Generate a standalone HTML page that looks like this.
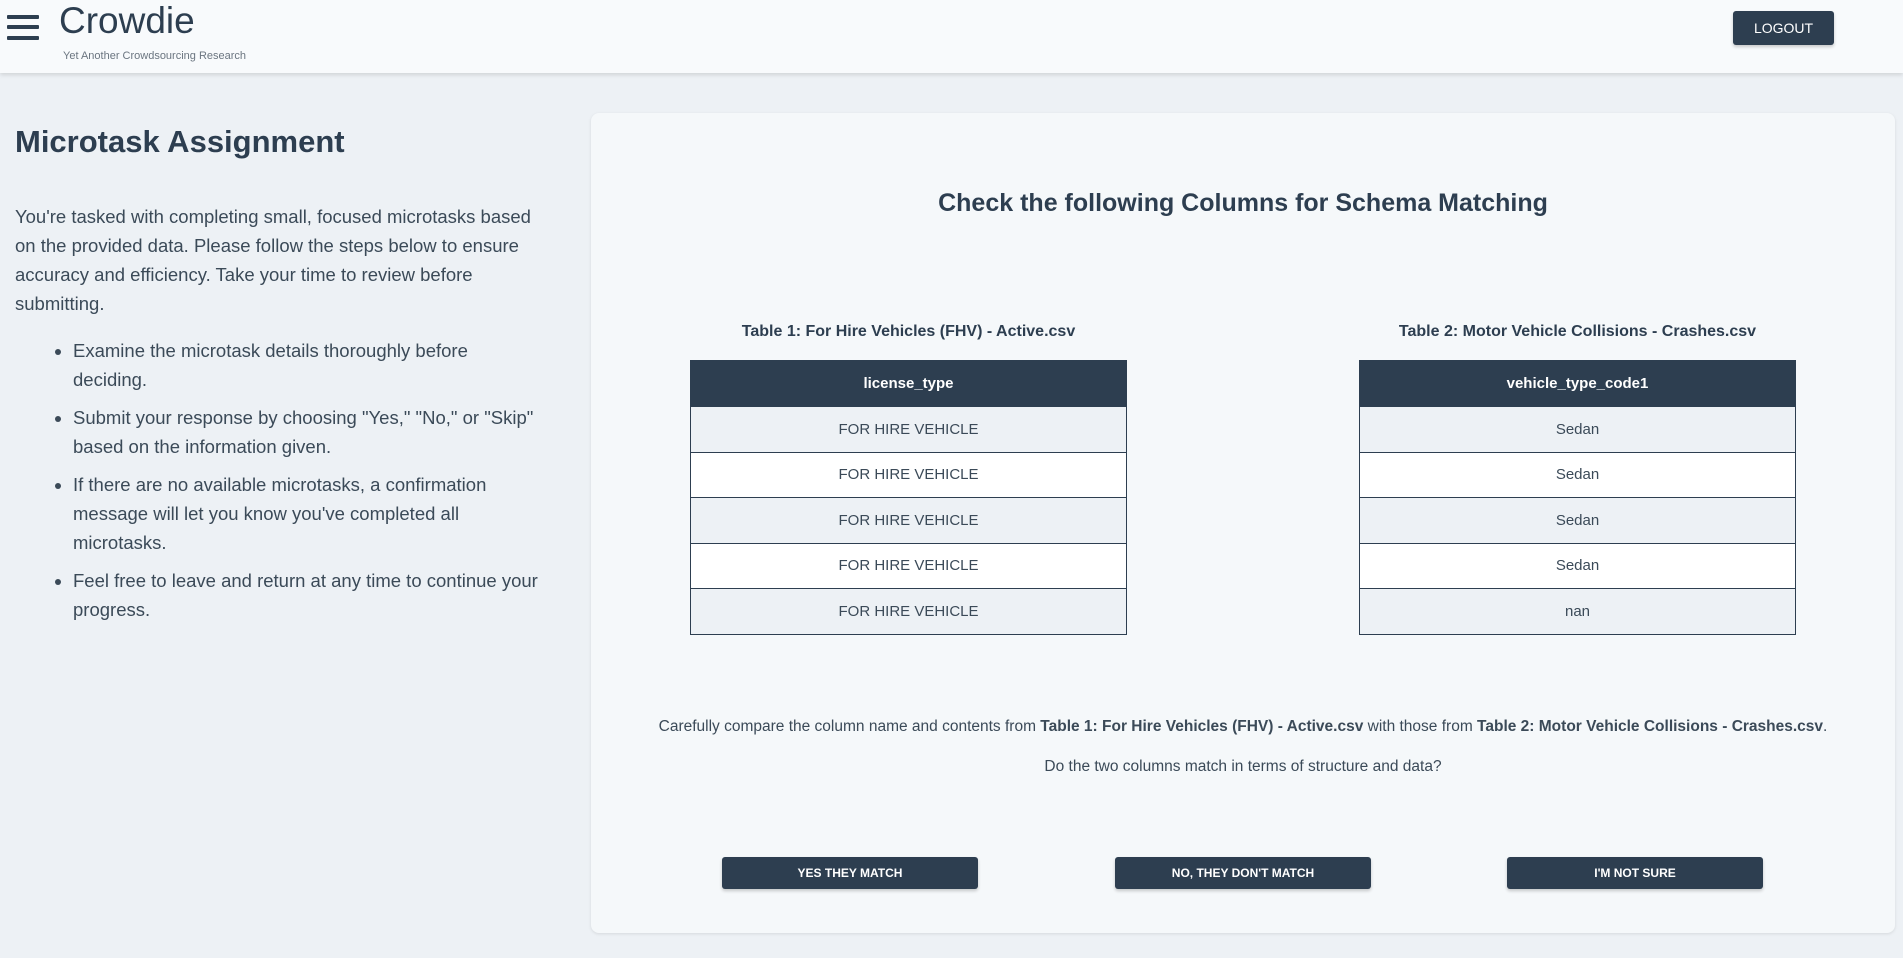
<!DOCTYPE html>
<html><head><meta charset="utf-8"><style>
*{box-sizing:border-box;margin:0;padding:0}
body{width:1903px;height:958px;background:#edf1f5;font-family:"Liberation Sans",Arial,sans-serif;color:#2d3e50;position:relative;overflow:hidden}
.hdr{position:absolute;left:0;top:0;width:1903px;height:73px;background:#f8fafc;box-shadow:0 2px 4px rgba(0,0,0,.12)}
.hb{position:absolute;left:7px;width:32px;height:4px;background:#2d3e50;border-radius:1px}
.logo{position:absolute;left:59px;top:0px;font-size:37px;color:#2d3e50}
.sub{position:absolute;left:63px;top:50px;font-size:11px;color:#6b7580}
.logout{position:absolute;left:1733px;top:11px;width:101px;height:34px;background:#2d3e50;color:#fff;font-size:14px;border-radius:3px;text-align:center;line-height:34px;box-shadow:0 2px 3px rgba(0,0,0,.2)}
.left{position:absolute;left:15px;top:124px;width:530px}
h1{font-size:31px;font-weight:600;margin-bottom:42px}
.left p{font-size:18.5px;line-height:29px;color:#3b4a58}
.left ul{margin-top:18px;padding-left:58px;font-size:18.5px;line-height:29px;color:#3b4a58}
.left li{margin-bottom:9px}
.card{position:absolute;left:591px;top:113px;width:1304px;height:820px;background:#f5f8fa;border-radius:8px;box-shadow:0 1px 3px rgba(0,0,0,.1)}
.t{position:absolute;left:0;width:100%;text-align:center}
h2{font-size:25px;font-weight:600}
.cap{position:absolute;font-size:16px;font-weight:600;text-align:center;width:437px}
table{position:absolute;width:437px;border-collapse:collapse;font-size:15px;text-align:center}
th{background:#2d3e50;color:#fff;height:46px;font-weight:bold;border:1px solid #2d3e50}
td{height:45.5px;border:1px solid #2d3e50;color:#3b4a58}
tr:nth-child(even) td{background:#edf1f5}
tr:nth-child(odd) td{background:#fff}
.btn{position:absolute;top:744px;width:256px;height:32px;background:#2d3e50;color:#fff;font-size:12px;font-weight:bold;text-align:center;line-height:32px;border-radius:3px;box-shadow:0 2px 3px rgba(0,0,0,.2)}
</style></head><body>
<div class="hdr">
<div class="hb" style="top:15px"></div><div class="hb" style="top:25px"></div><div class="hb" style="top:36px"></div>
<div class="logo">Crowdie</div>
<div class="sub">Yet Another Crowdsourcing Research</div>
<div class="logout">LOGOUT</div>
</div>
<div class="left">
<h1>Microtask Assignment</h1>
<p>You're tasked with completing small, focused microtasks based on the provided data. Please follow the steps below to ensure accuracy and efficiency. Take your time to review before submitting.</p>
<ul>
<li>Examine the microtask details thoroughly before deciding.</li>
<li>Submit your response by choosing "Yes," "No," or "Skip" based on the information given.</li>
<li>If there are no available microtasks, a confirmation message will let you know you've completed all microtasks.</li>
<li>Feel free to leave and return at any time to continue your progress.</li>
</ul>
</div>
<div class="card">
<h2 class="t" style="top:76px">Check the following Columns for Schema Matching</h2>
<div class="cap" style="left:99px;top:210px">Table 1: For Hire Vehicles (FHV) - Active.csv</div>
<div class="cap" style="left:768px;top:210px">Table 2: Motor Vehicle Collisions - Crashes.csv</div>
<table style="left:99px;top:247px"><tr><th>license_type</th></tr>
<tr><td>FOR HIRE VEHICLE</td></tr><tr><td>FOR HIRE VEHICLE</td></tr><tr><td>FOR HIRE VEHICLE</td></tr><tr><td>FOR HIRE VEHICLE</td></tr><tr><td>FOR HIRE VEHICLE</td></tr></table>
<table style="left:768px;top:247px"><tr><th>vehicle_type_code1</th></tr>
<tr><td>Sedan</td></tr><tr><td>Sedan</td></tr><tr><td>Sedan</td></tr><tr><td>Sedan</td></tr><tr><td>nan</td></tr></table>
<div class="t" style="top:605px;font-size:15.5px;color:#3b4a58">Carefully compare the column name and contents from <b>Table 1: For Hire Vehicles (FHV) - Active.csv</b> with those from <b>Table 2: Motor Vehicle Collisions - Crashes.csv</b>.</div>
<div class="t" style="top:645px;font-size:15.5px;color:#3b4a58">Do the two columns match in terms of structure and data?</div>
<div class="btn" style="left:131px">YES THEY MATCH</div>
<div class="btn" style="left:524px">NO, THEY DON'T MATCH</div>
<div class="btn" style="left:916px">I'M NOT SURE</div>
</div>
</body></html>
